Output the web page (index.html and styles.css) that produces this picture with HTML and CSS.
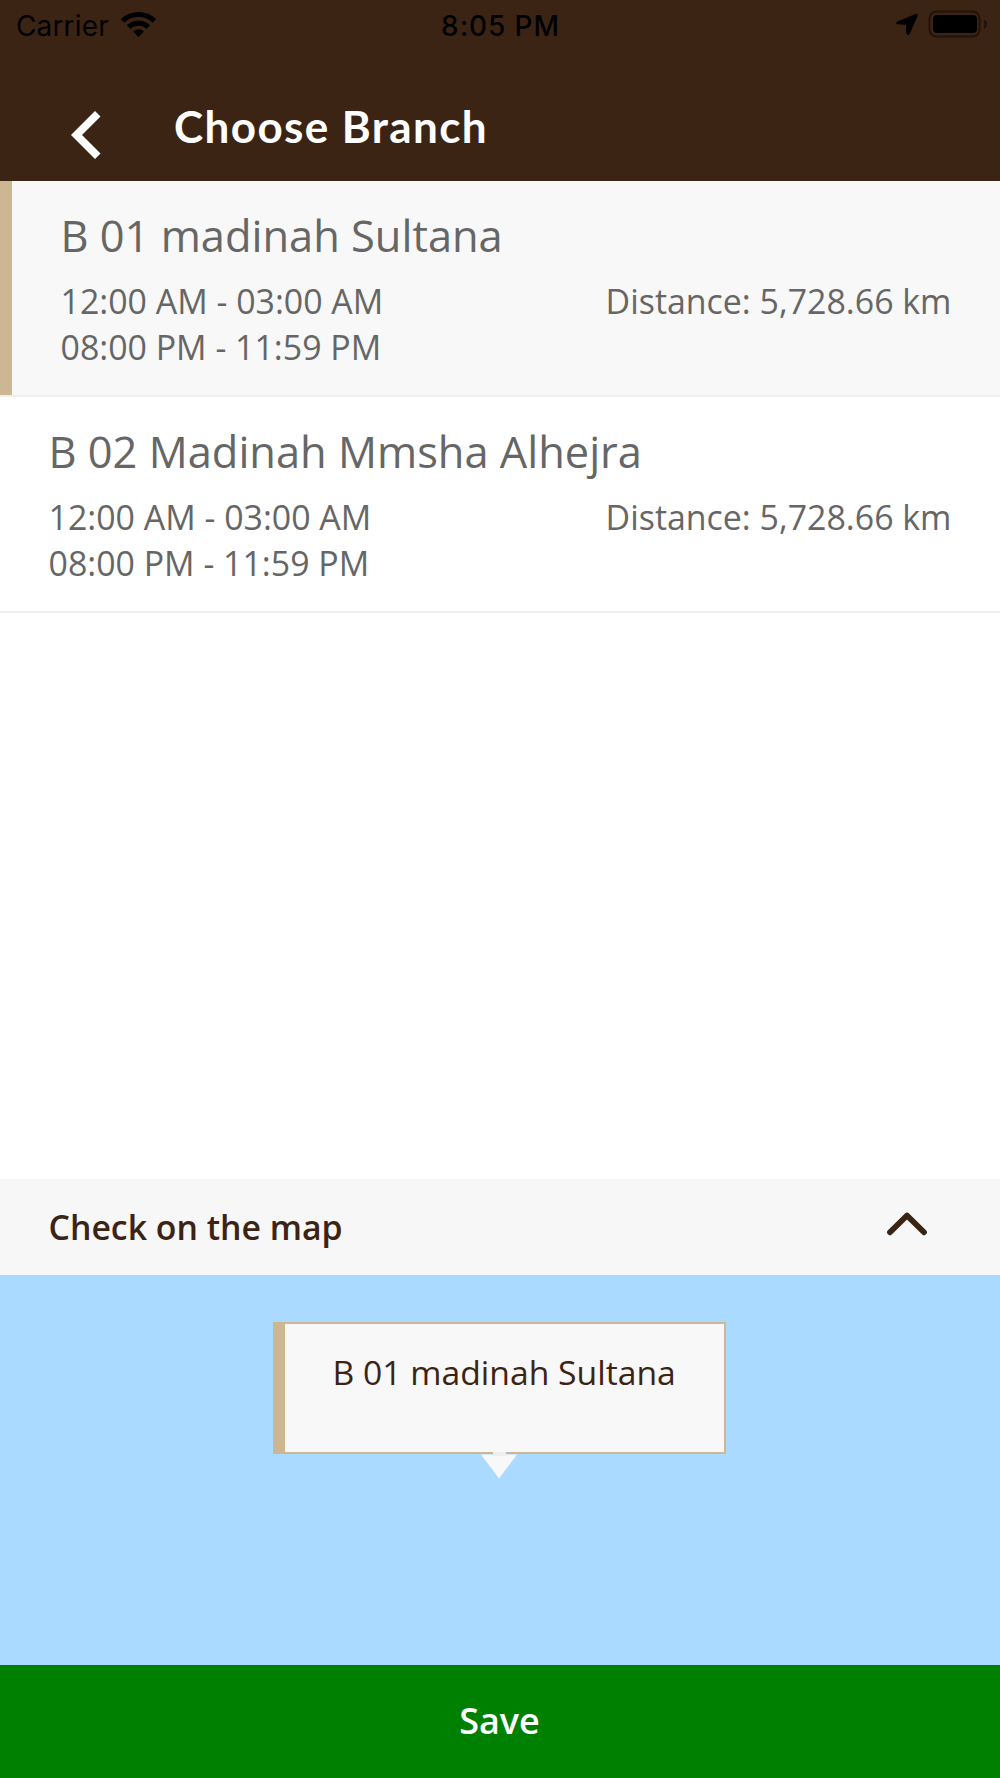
FILE: index.html
```html
<!DOCTYPE html>
<html lang="en">
<head>
<meta charset="utf-8">
<title>Choose Branch</title>
<link rel="stylesheet" href="styles.css">
</head>
<body>
<div class="screen">
  <header class="header">
    <div class="status">
      <div class="status-left">
        <span class="carrier">Carrier</span>
        <svg class="wifi" width="37" height="28" viewBox="0 0 37 28">
          <path d="M.8 8.1A25.3 25.3 0 0 1 36.2 8.1L32.6 11.8A20.2 20.2 0 0 0 4.4 11.8Z"/>
          <path d="M6.9 14.2A16.7 16.7 0 0 1 30.1 14.2L26.4 17.9A11.4 11.4 0 0 0 10.6 17.9Z"/>
          <path d="M13.1 20.5A7.8 7.8 0 0 1 23.9 20.5L18.5 26.2Z"/>
        </svg>
      </div>
      <span class="clock">8:05 PM</span>
      <div class="status-right">
        <svg width="24" height="24" viewBox="0 0 24 24">
          <path d="M21.2 1.2 2 9.2Q1.200 9.600 2 10.800L11.500 11.200 12 21Q12.700 22.400 14 21.200L22.400 2.300Q22.500 1 21.200 1.200Z" stroke="#000" stroke-linejoin="round"/>
        </svg>
        <svg class="battery" width="60" height="28" viewBox="0 0 60 28">
          <rect x="1.500" y="1.500" width="50" height="25" rx="7" fill="none" stroke="#20130b" stroke-width="2"/>
          <rect x="5" y="5" width="44" height="18" rx="4"/>
          <path d="M56 9.500Q59 11 59 14T56 19Z" fill="#20130b"/>
        </svg>
      </div>
    </div>
    <div class="nav">
      <svg class="back" width="32" height="50" viewBox="0 0 32 50">
        <path d="M1 25 25 .9 30.500 6.400 12 25 30.500 43.600 25 49.100Z"/>
      </svg>
      <h1 class="title">Choose Branch</h1>
    </div>
  </header>

  <main class="branches">
    <article class="branch selected">
      <h2 class="branch-name">B 01 madinah Sultana</h2>
      <div class="branch-info">
        <div>12:00 AM - 03:00 AM<br>08:00 PM - 11:59 PM</div>
        <div>Distance: 5,728.66 km</div>
      </div>
    </article>
    <article class="branch">
      <h2 class="branch-name">B 02 Madinah Mmsha Alhejra</h2>
      <div class="branch-info">
        <div>12:00 AM - 03:00 AM<br>08:00 PM - 11:59 PM</div>
        <div>Distance: 5,728.66 km</div>
      </div>
    </article>
  </main>

  <div class="map-toggle">
    <span>Check on the map</span>
    <svg width="42" height="26" viewBox="0 0 42 26">
      <path d="M4 21.300 21 4.500 38 21.300" fill="none" stroke="#3c2415" stroke-width="5.800" stroke-linecap="round" stroke-linejoin="round"/>
    </svg>
  </div>

  <section class="map">
    <div class="callout">
      B 01 madinah Sultana
      <svg class="pointer" width="36" height="27" viewBox="0 0 36 27">
        <path d="M0 2.500H36L18 26.500Z" fill="#f8f8f8"/>
        <path d="M0 0H36V2H0Z" fill="#cdb792"/>
        <path d="M12 0H25V4H12Z" fill="#efefef"/>
      </svg>
    </div>
  </section>

  <button class="save">Save</button>
</div>
</body>
</html>
```
FILE: styles.css
```css
* { box-sizing: border-box; }

body {
  margin: 0;
  font-family: "Open Sans", "Noto Sans", sans-serif;
  color: #666;
}

svg { display: block; flex: none; }

.screen {
  display: flex;
  flex-direction: column;
  width: 1000px;
  height: 1778px;
  background: #fff;
}

.header {
  height: 181px;
  background: #3c2415;
}

.status {
  display: grid;
  grid-template-columns: 1fr auto 1fr;
  align-items: center;
  height: 51px;
  padding: 0 12px 0 16px;
  font: 400 28px/51px Inter, sans-serif;
  color: #000;
}

.status-left {
  display: flex;
  align-items: center;
  gap: 11px;
}

.carrier {
  padding-top: 1px;
  letter-spacing: 0.15px;
}

.wifi { margin-top: -3px; }

.clock {
  padding-top: 1px;
  font-weight: 500;
  letter-spacing: 0.9px;
  margin-right: 3px;
}

.status-right {
  display: flex;
  align-items: center;
  justify-content: flex-end;
  gap: 9px;
}

.status-right svg { margin-top: -2px; }

.status-right .battery { margin-top: -4px; }

.nav {
  display: flex;
  align-items: flex-start;
  gap: 72px;
  height: 130px;
  padding: 45px 70px 0;
}

.back {
  margin-top: 14px;
  fill: #fff;
}

.title {
  margin: 0;
  font: 700 44px/60px Lato, sans-serif;
  letter-spacing: 1.4px;
  color: #fff;
}

.branches { flex: 1; }

.branch {
  display: flow-root;
  height: 216px;
  padding: 25px 48.5px 0;
  border-bottom: 2px solid #efefef;
}

.selected {
  padding-left: 60.5px;
  background: linear-gradient(to right, #cdb792 12px, #f8f8f8 12px);
}

.branch-name {
  margin: 0 0 11.5px;
  font-size: 43.4px;
  line-height: 60px;
  font-weight: 400;
}

.branch-info {
  display: flex;
  justify-content: space-between;
  font-size: 33.9px;
  line-height: 46.7px;
}

.map-toggle {
  display: flex;
  align-items: center;
  justify-content: space-between;
  height: 96px;
  padding: 0 72px 0 48.5px;
  background: #f7f7f7;
  font-size: 33.8px;
  font-weight: 600;
  color: #3c2415;
}

.map-toggle svg { margin-top: -6px; }

.map {
  display: flex;
  justify-content: center;
  align-items: flex-start;
  height: 390px;
  padding-top: 47px;
  background: #aadaff;
}

.callout {
  position: relative;
  width: 453px;
  height: 132px;
  margin-right: 1px;
  padding: 25px 0 0 47.5px;
  border: 2px solid #cdb792;
  border-left-width: 12px;
  background: #f8f8f8;
  font-size: 33.7px;
  line-height: 47px;
  color: #3c2415;
}

.pointer {
  position: absolute;
  left: 196px;
  top: 128px;
}

.save {
  height: 113px;
  padding: 0 1px 2px 0;
  border: 0;
  background: #008000;
  font: 600 36px "Open Sans", sans-serif;
  color: #fff;
}
```
